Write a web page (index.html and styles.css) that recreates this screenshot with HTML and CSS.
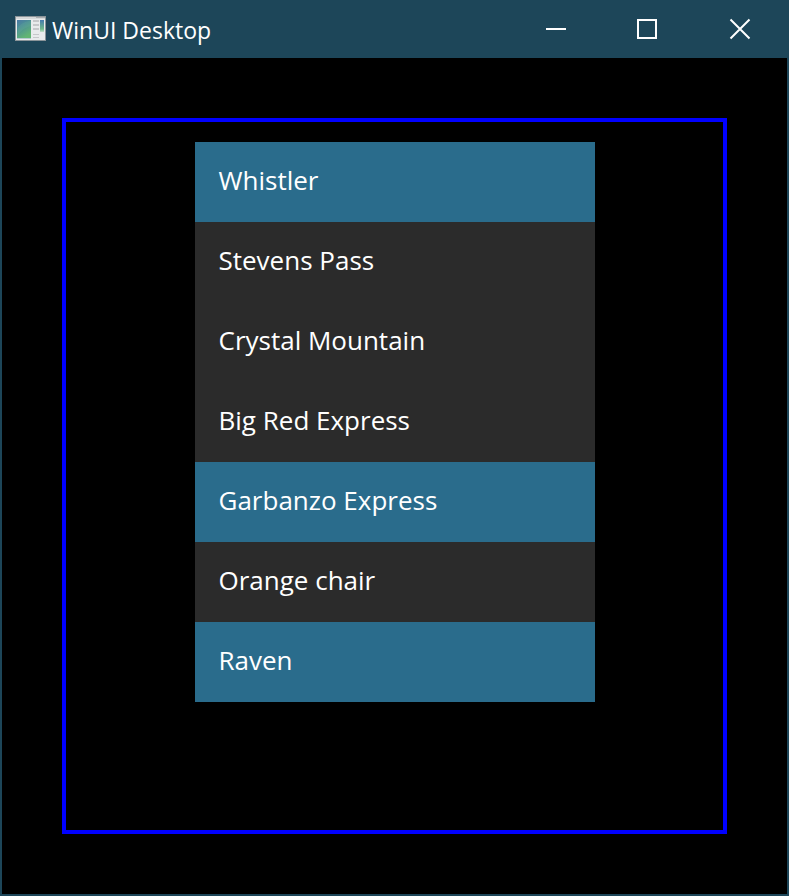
FILE: index.html
```html
<!DOCTYPE html>
<html lang="en">
<head>
<meta charset="utf-8">
<meta name="viewport" content="width=device-width, initial-scale=1">
<title>WinUI Desktop</title>
<link rel="stylesheet" href="styles.css">
</head>
<body>
<div class="window">
  <header class="titlebar">
    <svg class="app-icon" width="32" height="26" viewBox="0 0 32 26" aria-hidden="true">
      <defs>
        <linearGradient id="pane" x1="0" y1="0" x2="0.5" y2="1">
          <stop offset="0" stop-color="#4a78a4"/>
          <stop offset="0.45" stop-color="#4c9294"/>
          <stop offset="1" stop-color="#62b573"/>
        </linearGradient>
        <linearGradient id="strip" x1="0" y1="0" x2="0" y2="1">
          <stop offset="0" stop-color="#447bad"/>
          <stop offset="0.75" stop-color="#6fba8b"/>
          <stop offset="1" stop-color="#c6dfcc"/>
        </linearGradient>
      </defs>
      <rect x="0" y="0" width="31" height="25" fill="#8b9499"/>
      <rect x="1" y="1" width="29" height="23" fill="#e9ebec"/>
      <rect x="1" y="1" width="29" height="2" fill="#d5d7d8"/>
      <path d="M21 1h9v1h-9z" fill="#a9adb0"/>
      <rect x="2" y="4" width="14" height="19" fill="#b5c9cf"/>
      <rect x="2" y="4" width="14" height="18" fill="url(#pane)"/>
      <path d="M3 12c3-5 8-7 13-7v5c-5 1-10 4-13 9z" fill="#7fc0a0" opacity=".15"/>
      <path d="M18 4h6v2h-6zM18 8h6v2h-6zM18 12h6v2h-6zM18 18h6v1h-6zM18 21h6v1h-6z" fill="#c6c8ca"/>
      <rect x="25" y="4" width="4" height="12" fill="url(#strip)"/>
    </svg>
    <h1 class="title">WinUI Desktop</h1>
    <div class="caption-buttons">
      <button class="caption-button" type="button" aria-label="Minimize">
        <svg width="24" height="24" viewBox="0 0 24 24" aria-hidden="true"><path d="M2 12h20"/></svg>
      </button>
      <button class="caption-button" type="button" aria-label="Maximize">
        <svg width="24" height="24" viewBox="0 0 24 24" aria-hidden="true"><rect x="2" y="3" width="18" height="18"/></svg>
      </button>
      <button class="caption-button" type="button" aria-label="Close">
        <svg width="24" height="24" viewBox="0 0 24 24" aria-hidden="true"><path d="M2.500 2.500l19 19M21.500 2.500l-19 19"/></svg>
      </button>
    </div>
  </header>
  <main class="content">
    <div class="frame">
      <select class="list" multiple size="7" aria-label="Locations">
        <option selected>Whistler</option>
        <option>Stevens Pass</option>
        <option>Crystal Mountain</option>
        <option>Big Red Express</option>
        <option selected>Garbanzo Express</option>
        <option>Orange chair</option>
        <option selected>Raven</option>
      </select>
    </div>
  </main>
</div>
</body>
</html>
```
FILE: styles.css
```css
* {
  box-sizing: border-box;
}

body {
  margin: 0;
  background: #000;
  color: #fff;
  font-family: "Segoe UI", "Open Sans", "Noto Sans", sans-serif;
}

.window {
  display: flex;
  flex-direction: column;
  min-height: 100vh;
  border: 2px solid #1d4659;
  border-top: 0;
}

.titlebar {
  display: flex;
  align-items: center;
  height: 58px;
  padding-left: 13px;
  padding-right: 1px;
  background: #1d4659;
}

.app-icon {
  flex: none;
}

.title {
  flex: 1;
  margin: 0 0 0 5px;
  font-size: 23px;
  line-height: 32px;
  font-weight: 400;
  padding-top: 2px;
}

.caption-buttons {
  display: flex;
  align-self: stretch;
}

.caption-button {
  display: flex;
  align-items: center;
  justify-content: center;
  width: 92px;
  padding: 0;
  border: 0;
  background: none;
}

.caption-button svg {
  fill: none;
  stroke: #fff;
  stroke-width: 2;
}

.content {
  flex: 1;
  display: flex;
  padding: 60px;
}

.frame {
  flex: 1;
  display: flex;
  align-items: flex-start;
  justify-content: center;
  padding: 20px;
  border: 4px solid #00f;
}

.list {
  appearance: none;
  width: 400px;
  max-width: 100%;
  height: auto;
  margin: 0;
  padding: 0;
  border: 0;
  border-radius: 0;
  outline: 0;
  overflow: hidden;
  background: #2b2b2b;
  color: #fff;
  font-family: inherit;
  font-size: 26px;
}

.list option {
  min-height: 80px;
  padding: 20px 24px;
  line-height: 40px;
  color: #fff;
}

.list option:checked {
  background: #2a6c8c linear-gradient(#2a6c8c, #2a6c8c);
  color: #fff;
}
```
